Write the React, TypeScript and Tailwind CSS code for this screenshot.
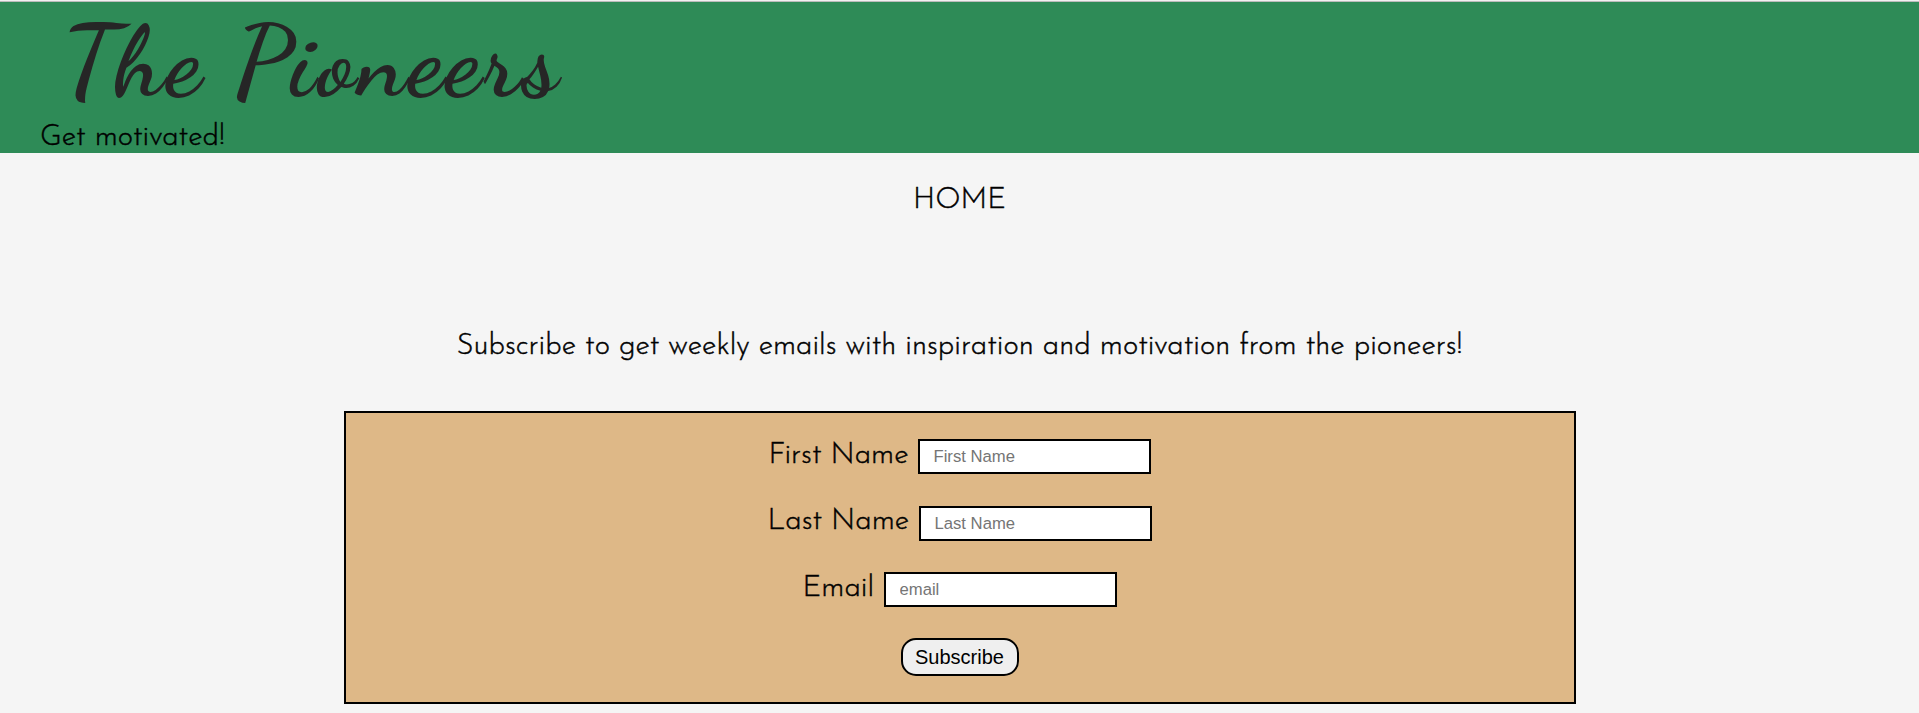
import React from "react";

const body = "font-['Josefin_Sans','Lato',sans-serif] font-light [-webkit-text-stroke:0.45px_black] text-black whitespace-nowrap text-[29.4px] leading-[36px]";

function Field({ id, label, placeholder, type, labelClass }: { id: string; label: string; placeholder: string; type: string; labelClass: string }) {
  return (
    <div className="flex h-[35px] justify-center">
      <label htmlFor={id} className={labelClass}>{label}</label>
      <input
        id={id}
        type={type}
        placeholder={placeholder}
        className="h-[35px] w-[233px] border-2 border-black bg-white pl-[14px] pr-3 pt-px font-['Liberation_Sans',Arial,sans-serif] text-[16.67px] font-normal [-webkit-text-stroke:0] placeholder:text-[#757575]"
      />
    </div>
  );
}

export default function App() {
  return (
    <div className={`h-[713px] overflow-hidden border-t border-[#f1f1f1] bg-[#f5f5f5] ${body}`}>
      <header className="h-[152px] border-t border-[#bcbcbc] bg-[#2e8b57] pl-[40px]">
        <h1 className="h-[118px] pl-[22px] font-['Dancing_Script',cursive] text-[100px] font-bold leading-[120px] tracking-[3.2px] text-[#262626] [-webkit-text-stroke:0]">The Pioneers</h1>
        <p>Get motivated!</p>
      </header>
      <nav className="flex h-[90px] justify-center pt-[30px]">
        <a href="#">HOME</a>
      </nav>
      <main className="flex flex-col items-center">
        <p className="mt-[86px] h-[82px]">Subscribe to get weekly emails with inspiration and motivation from the pioneers!</p>
        <form className="flex h-[293px] w-[1232px] flex-col items-center border-2 border-black bg-[#deb887] pt-[26px]">
          <Field id="first" label="First Name" placeholder="First Name" type="text" labelClass="w-[149px] leading-[33px]" />
          <div className="h-8" />
          <Field id="last" label="Last Name" placeholder="Last Name" type="text" labelClass="w-[151px] leading-[32px]" />
          <div className="h-[31px]" />
          <Field id="email" label="Email" placeholder="email" type="email" labelClass="w-[81px] leading-[33px]" />
          <button type="button" className="mt-[31px] h-[38px] w-[118px] rounded-[15px] border-2 border-black bg-[#efefef] font-['Liberation_Sans',Arial,sans-serif] text-[20px] font-normal leading-none [-webkit-text-stroke:0]">Subscribe</button>
        </form>
      </main>
    </div>
  );
}
